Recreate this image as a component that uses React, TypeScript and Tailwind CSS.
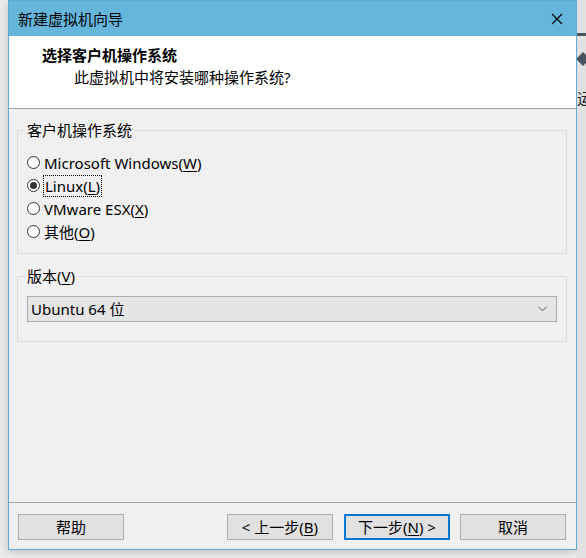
import type { ReactNode } from 'react'

const font = 'font-["Noto_Sans","Noto_Sans_CJK_SC",sans-serif]'

function Mn({ children }: { children: ReactNode }) {
  return <span className="underline underline-offset-2">{children}</span>
}

function Radio({ checked, children, focused }: { checked?: boolean; children: ReactNode; focused?: boolean }) {
  return (
    <div className="flex h-[23px] items-center">
      <span className="ml-[9px] flex h-[13px] w-[13px] items-center justify-center rounded-full border border-[#333] bg-white">
        {checked ? <span className="h-[7px] w-[7px] rounded-full bg-[#333]" /> : null}
      </span>
      <span
        className={
          focused
            ? 'ml-[3px] border border-dotted border-black px-[1px] leading-[20px]'
            : 'ml-[4px] leading-[20px]'
        }
      >
        {children}
      </span>
    </div>
  )
}

function Button({ children, primary }: { children: ReactNode; primary?: boolean }) {
  return (
    <button
      type="button"
      className={
        primary
          ? 'h-[26px] w-[106px] border-2 border-[#0078d7] bg-[#e1e1e1] text-[15px] leading-[20px] text-black'
          : 'h-[26px] w-[106px] border border-[#adadad] bg-[#e1e1e1] text-[15px] leading-[20px] text-black'
      }
    >
      {children}
    </button>
  )
}

export default function App() {
  return (
    <div className={`flex h-[558px] w-[586px] bg-[#ebebeb] text-[15px] text-black ${font}`}>
      <div className="w-[8px]" />
      <div className="flex h-[550px] w-[569px] flex-col border border-[#5fa9d2] bg-[#f0f0f0] shadow-[0_2px_8px_rgba(0,0,0,0.18)]">
        <div className="flex h-[35px] items-center justify-between bg-[#66b6dc] pl-[9px] pr-[13px]">
          <span className="leading-[20px]">新建虚拟机向导</span>
          <svg width="12" height="12" viewBox="0 0 12 12" className="mt-[1px]">
            <path d="M1 1 L11 11 M11 1 L1 11" stroke="#000" strokeWidth="1.1" />
          </svg>
        </div>
        <div className="h-[73px] border-b border-[#a0a0a0] bg-white pt-[9px]">
          <div className="pl-[33px] font-bold leading-[20px]">选择客户机操作系统</div>
          <div className="mt-[2px] pl-[65px] leading-[20px]">此虚拟机中将安装哪种操作系统?</div>
        </div>
        <div className="flex-1 px-[8px] pt-[11px]">
          <fieldset className="w-[550px] border border-[#dcdcdc] pb-[10px]">
            <legend className="ml-[6px] px-[3px] leading-[20px]">客户机操作系统</legend>
            <div className="pt-[11px]">
              <Radio>
                Microsoft Windows(<Mn>W</Mn>)
              </Radio>
              <Radio checked focused>
                Linux(<Mn>L</Mn>)
              </Radio>
              <Radio>
                VMware ESX(<Mn>X</Mn>)
              </Radio>
              <Radio>
                其他(<Mn>O</Mn>)
              </Radio>
            </div>
          </fieldset>
          <fieldset className="mt-[12px] w-[550px] border border-[#dcdcdc] px-[9px] pb-[19px]">
            <legend className="ml-[-3px] px-[3px] leading-[20px]">
              版本(<Mn>V</Mn>)
            </legend>
            <div className="mt-[10px] flex h-[26px] items-center justify-between border border-[#acacac] bg-[#e5e5e5] pl-[3px] pr-[9px]">
              <span className="leading-[20px]">Ubuntu 64 位</span>
              <svg width="9" height="6" viewBox="0 0 9 6">
                <path d="M0.5 0.8 L4.5 4.8 L8.5 0.8" stroke="#555" strokeWidth="1" fill="none" />
              </svg>
            </div>
          </fieldset>
        </div>
        <div className="flex h-[47px] items-start border-t border-[#a0a0a0] pl-[9px] pr-[10px] pt-[11px]">
          <Button>帮助</Button>
          <div className="flex-1" />
          <Button>
            &lt; 上一步(<Mn>B</Mn>)
          </Button>
          <div className="w-[11px]" />
          <Button primary>
            下一步(<Mn>N</Mn>) &gt;
          </Button>
          <div className="w-[10px]" />
          <Button>取消</Button>
        </div>
      </div>
      <div className="flex h-[558px] w-[9px] flex-col items-start overflow-hidden bg-[#e1e1e1]">
        <div className="mt-[33px] h-[3px] w-[9px] bg-[#4a5560]" />
        <div className="mt-[18px] ml-[1px] h-[10px] w-[10px] rotate-45 bg-[#4a5560]" />
        <div className="mt-[24px] text-[15px] leading-[20px] text-[#222]">运</div>
      </div>
    </div>
  )
}
